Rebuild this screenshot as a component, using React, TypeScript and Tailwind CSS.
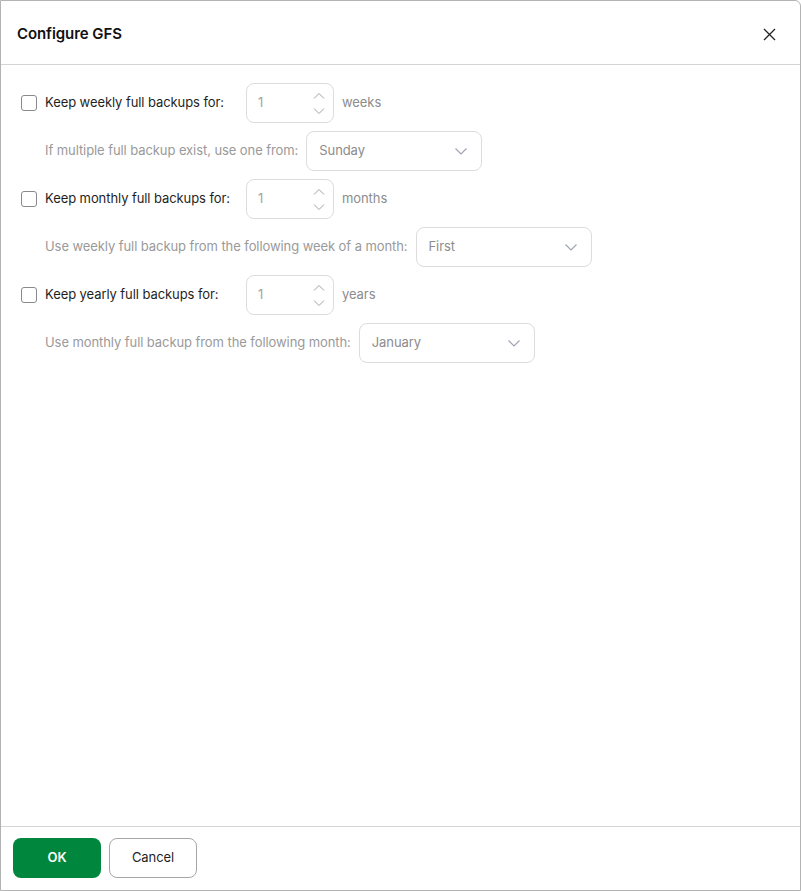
import React from 'react';

const font = { fontFamily: 'Inter, "Liberation Sans", sans-serif', letterSpacing: '-0.08px' };

const Chevron = ({ up }: { up?: boolean }) => (
  <svg width="12" height="7" viewBox="0 0 12 7" fill="none" stroke="#9ca3af" strokeWidth="1">
    {up ? <path d="M1 6.5L6 1.5L11 6.5" /> : <path d="M1 0.5L6 5.5L11 0.5" />}
  </svg>
);

const NumberBox = () => (
  <div className="w-[88px] h-10 border border-[#dcdcdc] rounded-lg flex items-center pl-[11px] pr-2">
    <span className="flex-1 text-[13px] text-[#a3a3a3]">1</span>
    <div className="flex flex-col gap-[9px]">
      <Chevron up />
      <Chevron />
    </div>
  </div>
);

const Select = ({ value }: { value: string }) => (
  <div className="w-[176px] h-10 border border-[#dcdcdc] rounded-lg flex items-center pl-3 pr-[14px]">
    <span className="flex-1 text-[13px] text-[#8c8c8c]">{value}</span>
    <svg width="12" height="7" viewBox="0 0 12 7" fill="none" stroke="#9ca3af" strokeWidth="1.1">
      <path d="M0.5 0.5L6 6L11.5 0.5" />
    </svg>
  </div>
);

const Group = ({ label, unit, sub, value }: { label: string; unit: string; sub: string; value: string }) => (
  <div className="flex flex-col gap-2">
    <div className="flex items-center">
      <div className="w-4 h-4 border border-[#8a8a8a] rounded-[3px] bg-white"></div>
      <span className="ml-2 w-[201px] text-[13px] text-[#1f1f1f]">{label}</span>
      <NumberBox />
      <span className="ml-2 text-[13px] text-[#8c8c8c]">{unit}</span>
    </div>
    <div className="flex items-center pl-6 gap-2">
      <span className="text-[13px] text-[#9a9a9a]">{sub}</span>
      <Select value={value} />
    </div>
  </div>
);

const App = () => {
  return (
    <div style={font} className="w-[801px] h-[891px] bg-white border border-[#b3b3b3] rounded-tr-md flex flex-col">
      <div className="h-16 flex items-center justify-between pl-4 pr-6 pt-[3px] border-b border-[#d4d4d4]">
        <h1 className="text-[15px] font-semibold text-[#111]">Configure GFS</h1>
        <svg width="13" height="13" viewBox="0 0 13 13" stroke="#222" strokeWidth="1.3">
          <path d="M1 1L12 12M12 1L1 12" />
        </svg>
      </div>
      <div className="flex-1 pl-5 pt-[18px] flex flex-col gap-2">
        <Group label="Keep weekly full backups for:" unit="weeks" sub="If multiple full backup exist, use one from:" value="Sunday" />
        <Group label="Keep monthly full backups for:" unit="months" sub="Use weekly full backup from the following week of a month:" value="First" />
        <Group label="Keep yearly full backups for:" unit="years" sub="Use monthly full backup from the following month:" value="January" />
      </div>
      <div className="h-16 border-t border-[#d4d4d4] flex items-start pt-[11px] px-3 gap-2">
        <button className="w-[88px] h-10 rounded-lg bg-[#00873d] text-white text-[13px] font-semibold">OK</button>
        <button className="w-[88px] h-10 rounded-lg border border-[#a6a6a6] text-[13px] text-[#1f1f1f]">Cancel</button>
      </div>
    </div>
  );
};

export default App;
